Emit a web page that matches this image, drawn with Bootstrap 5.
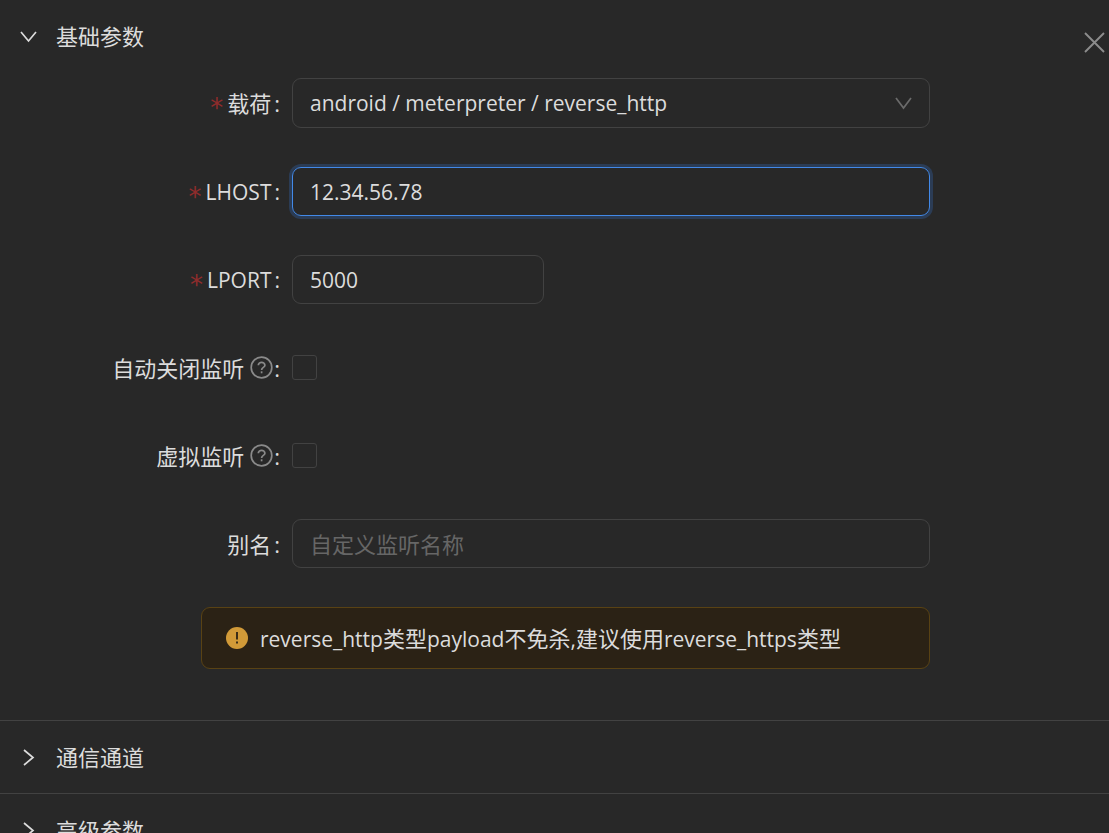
<!DOCTYPE html>
<html lang="zh-CN" data-bs-theme="dark">
<head>
<meta charset="utf-8">
<meta name="viewport" content="width=device-width, initial-scale=1">
<title>基础参数</title>
<link href="https://cdn.jsdelivr.net/npm/bootstrap@5.3.0/dist/css/bootstrap.min.css" rel="stylesheet">
<style>
  body { background: #282828; color: #dcdcdc; font-family: "Open Sans", "Noto Sans CJK SC", sans-serif; font-size: 22px; line-height: 34px; }
  .panel { border-bottom: 1px solid #424242; }
  .panel-toggle { display: flex; align-items: center; gap: 19px; width: 100%; padding: 19px 20px; border: 0; background: none; color: inherit; text-align: left; }
  .close-btn { top: 32px; right: 4px; padding: 0; border: 0; background: none; color: #8c8c8c; line-height: 0; }
  .panel-form { display: grid; gap: 39px; padding: 6px 0 51px 20px; }
  .form-line { display: grid; grid-template-columns: 272fr 638fr 179fr; align-items: center; min-height: 49px; }
  .notice-line { grid-template-columns: 181fr 729fr 179fr; }
  .field-label { display: flex; justify-content: flex-end; align-items: center; padding-right: 12px; }
  .field-label.latin, .latin { font-size: 21px; }
  .required-mark { padding-top: 10px; color: #8f2c2c; font-family: "DejaVu Sans", sans-serif; font-size: 26px; line-height: 24px; margin-right: 4px; }
  .colon { margin-left: 3px; }
  .help-icon { margin-left: 6px; color: #8a8a8a; }
  .help-icon + .colon { margin-left: 1px; }
  .field, .field:focus { height: 49px; padding: 0 17px; border: 1px solid #424242; border-radius: 9px; background: none; color: #dcdcdc; font-size: 22px; box-shadow: none; }
  .field.latin { font-size: 21px; }
  .field.select-field { height: 50px; padding-top: 2px; appearance: none; }
  .field.is-active { border-color: #4289e8; box-shadow: 0 0 0 3px #2b3c55; }
  .field::placeholder { color: #666; opacity: 1; }
  .port-field { width: 252px; }
  .select-arrow { right: 18px; top: 17px; color: #6b6b6b; pointer-events: none; }
  .tick, .tick:checked { width: 25px; height: 25px; margin: 0; border: 1px solid #424242; background-color: transparent; }
  .tick[type=checkbox] { border-radius: 3px; }
  .notice { display: flex; align-items: center; gap: 12px; height: 62px; padding: 0 24px; border: 1px solid #594214; border-radius: 9px; background: #2b2215; }
</style>
</head>
<body class="vh-100 overflow-hidden position-relative">
<main>
  <section class="panel">
    <button class="panel-toggle" type="button" aria-expanded="true">
      <svg width="17" height="17" viewBox="0 0 17 17" fill="none" stroke="currentColor" stroke-width="1.7"><path d="M1 4l7.500 9L16 4"/></svg>
      <span>基础参数</span>
    </button>
    <form class="panel-form">
      <div class="form-line">
        <label class="field-label" for="payload"><span class="required-mark">*</span>载荷<span class="colon">:</span></label>
        <div class="position-relative">
          <select id="payload" class="form-select field select-field latin"><option>android / meterpreter / reverse_http</option></select>
          <svg class="select-arrow position-absolute" width="17" height="17" viewBox="0 0 17 17" fill="none" stroke="currentColor" stroke-width="1.7"><path d="M1 3l7.500 10L16 3"/></svg>
        </div>
      </div>
      <div class="form-line">
        <label class="field-label latin" for="lhost"><span class="required-mark">*</span>LHOST<span class="colon">:</span></label>
        <input id="lhost" class="form-control field is-active latin" type="text" value="12.34.56.78">
      </div>
      <div class="form-line">
        <label class="field-label latin" for="lport"><span class="required-mark">*</span>LPORT<span class="colon">:</span></label>
        <input id="lport" class="form-control field port-field latin" type="text" inputmode="numeric" value="5000">
      </div>
      <div class="form-line">
        <label class="field-label" for="autoclose">自动关闭监听
          <svg class="help-icon" width="23" height="23" viewBox="0 0 23 23" fill="none" stroke="currentColor" stroke-width="1.7"><circle cx="11.500" cy="11.500" r="10.300"/><path d="M8.300 9.300c0-4 6.600-4 6.600 0 0 2.200-3.300 2-3.300 4.600"/><path d="M11.600 15.300v2"/></svg><span class="colon">:</span></label>
        <input id="autoclose" class="form-check-input tick" type="checkbox">
      </div>
      <div class="form-line">
        <label class="field-label" for="virtual">虚拟监听
          <svg class="help-icon" width="23" height="23" viewBox="0 0 23 23" fill="none" stroke="currentColor" stroke-width="1.7"><circle cx="11.500" cy="11.500" r="10.300"/><path d="M8.300 9.300c0-4 6.600-4 6.600 0 0 2.200-3.300 2-3.300 4.600"/><path d="M11.600 15.300v2"/></svg><span class="colon">:</span></label>
        <input id="virtual" class="form-check-input tick" type="checkbox">
      </div>
      <div class="form-line">
        <label class="field-label" for="alias">别名<span class="colon">:</span></label>
        <input id="alias" class="form-control field" type="text" placeholder="自定义监听名称">
      </div>
      <div class="form-line notice-line">
        <span></span>
        <div class="notice" role="alert">
          <svg width="22" height="22" viewBox="0 0 22 22"><circle cx="11" cy="11" r="11" fill="#d19a38"/><path d="M11 5v7.500M11 14.500v2" stroke="#2b2215" stroke-width="1.800"/></svg>
          <span><span class="latin">reverse_http</span>类型<span class="latin">payload</span>不免杀<span class="latin">,</span>建议使用<span class="latin">reverse_https</span>类型</span>
        </div>
      </div>
    </form>
  </section>
  <section class="panel">
    <button class="panel-toggle" type="button" aria-expanded="false">
      <svg width="17" height="17" viewBox="0 0 17 17" fill="none" stroke="currentColor" stroke-width="1.7"><path d="M4 1l9 7.500L4 16"/></svg>
      <span>通信通道</span>
    </button>
  </section>
  <section class="panel">
    <button class="panel-toggle" type="button" aria-expanded="false">
      <svg width="17" height="17" viewBox="0 0 17 17" fill="none" stroke="currentColor" stroke-width="1.7"><path d="M4 1l9 7.500L4 16"/></svg>
      <span>高级参数</span>
    </button>
  </section>
</main>
<button class="close-btn position-absolute" type="button" aria-label="关闭">
  <svg width="21" height="21" viewBox="0 0 21 21" fill="none" stroke="currentColor" stroke-width="1.900"><path d="M1 1l19 19M20 1L1 20"/></svg>
</button>
<script src="https://cdn.jsdelivr.net/npm/bootstrap@5.3.0/dist/js/bootstrap.bundle.min.js"></script>
</body>
</html>
